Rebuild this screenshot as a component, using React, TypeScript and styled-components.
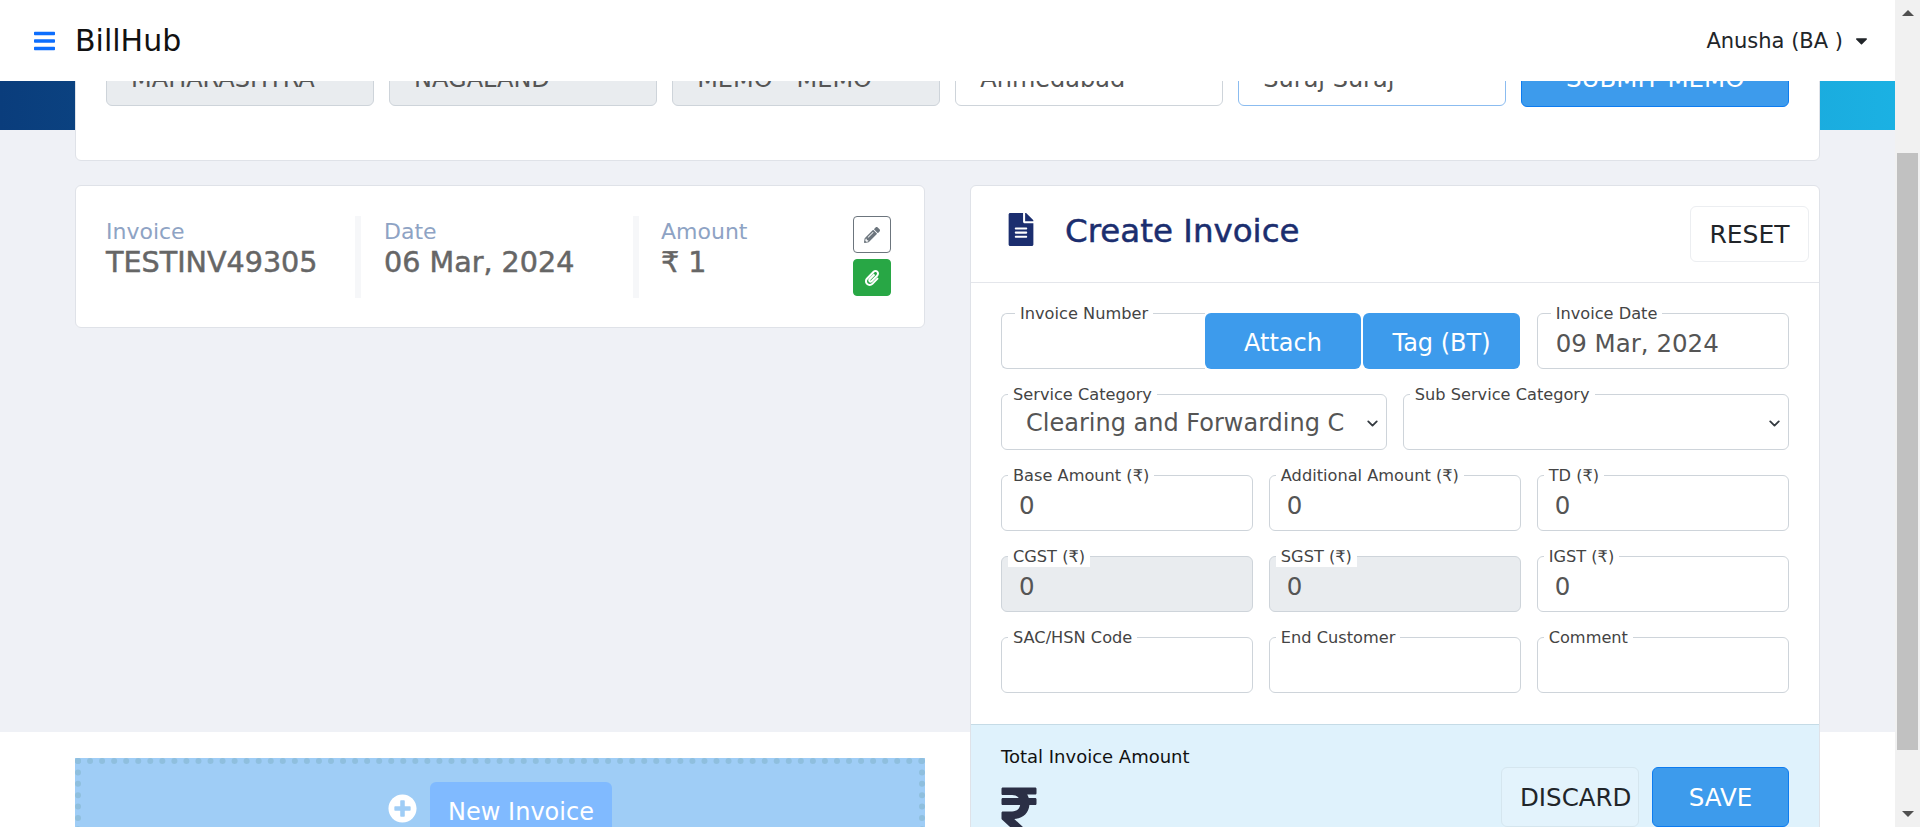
import React from "react";
import styled, { createGlobalStyle } from "styled-components";
import { ChevronDown } from "lucide-react";
import {
  FaBars,
  FaCaretDown,
  FaFileAlt,
  FaPaperclip,
  FaPencilAlt,
  FaPlusCircle,
  FaRupeeSign,
} from "react-icons/fa";

const GlobalStyle = createGlobalStyle`
  html, body {
    margin: 0;
    height: 100%;
    overflow: hidden;
    font-family: "DejaVu Sans", "Noto Sans", sans-serif;
  }
  * { box-sizing: border-box; }
`;

const Shell = styled.div`
  display: flex;
  width: 100%;
  height: 827px;
  overflow: hidden;
`;

const Viewport = styled.div`
  flex: 1;
  min-width: 0;
  display: flex;
  flex-direction: column;
`;

const Navbar = styled.nav`
  position: relative;
  z-index: 2;
  flex: none;
  height: 81px;
  background: #fff;
  display: flex;
  align-items: center;
  padding: 0 24px 0 34px;
`;

const MenuIcon = styled(FaBars)`
  margin-top: 1px;
  width: 21px;
  height: 24px;
  color: #0d6efd;
`;

const Brand = styled.div`
  margin-left: 20px;
  font-size: 30px;
  color: #111;
`;

const UserMenu = styled.div`
  margin-left: auto;
  display: flex;
  align-items: center;
  gap: 9px;
  font-size: 21px;
  color: #212529;
`;

const Main = styled.main`
  flex: 1;
  padding: 0 75px;
  background:
    linear-gradient(90deg, #0a3d7c, #1bb1e3) top / 100% 49px no-repeat,
    linear-gradient(#eff1f6, #eff1f6) top / 100% 651px no-repeat,
    #fff;
`;

const Card = styled.section`
  background: #fff;
  border: 1px solid #dfe2e8;
  border-radius: 6px;
`;

const MemoCard = styled(Card)`
  margin-top: -51px;
  height: 131px;
  padding: 19px 30px 0;
  display: grid;
  grid-template-columns: repeat(6, 1fr);
  column-gap: 15.5px;
  align-items: start;
`;

const Control = styled.div<{ $disabled?: boolean; $focused?: boolean }>`
  height: 56px;
  display: flex;
  align-items: center;
  padding: 4px 18px 0;
  font-size: 24.5px;
  color: #555;
  white-space: nowrap;
  overflow: hidden;
  background: ${(p) => (p.$disabled ? "#e9ecef" : "#fff")};
  border: 1px solid ${(p) => (p.$focused ? "#8bbcf0" : "#ced4da")};
  border-radius: 6px;
`;

const MemoSelect = styled(Control)`
  padding: 2px 18px 0 24px;
  font-size: 24px;
`;

const SubmitButton = styled.button`
  height: 57px;
  border: 1px solid #0d7cf0;
  border-radius: 6px;
  background: #3d9bec;
  color: #fff;
  font: inherit;
  font-size: 24.5px;
`;

const Columns = styled.div`
  margin-top: 24px;
  display: grid;
  grid-template-columns: 850px 850px;
  column-gap: 45px;
  align-items: start;
`;

const LeftColumn = styled.div`
  display: flex;
  flex-direction: column;
`;

const InvoiceCard = styled(Card)`
  height: 143px;
  padding: 30px 33px 29px 30px;
  display: flex;
`;

const Stat = styled.div<{ $width: number; $last?: boolean }>`
  width: ${(p) => p.$width}px;
  flex: ${(p) => (p.$last ? 1 : "none")};
  padding-left: ${(p) => (p.$last ? 22 : 0)}px;
  border-right: ${(p) => (p.$last ? "none" : "6px solid #f6f7f9")};
`;

const DateStat = styled(Stat)`
  padding-left: 23px;
`;

const StatLabel = styled.div`
  padding-top: 1px;
  font-size: 22px;
  line-height: 29px;
  color: #8ea3c4;
`;

const StatValue = styled.div`
  font-size: 28.6px;
  line-height: 33px;
  color: #666;
  -webkit-text-stroke: 0.5px #666;
`;

const ActionStack = styled.div`
  flex: none;
  display: flex;
  flex-direction: column;
  gap: 6px;
`;

const IconButton = styled.button<{ $green?: boolean }>`
  width: 38px;
  height: 37px;
  padding: 0;
  display: flex;
  align-items: center;
  justify-content: center;
  border-radius: 4px;
  border: 1px solid ${(p) => (p.$green ? "#28a745" : "#6c757d")};
  background: ${(p) => (p.$green ? "#28a745" : "#fff")};
  color: ${(p) => (p.$green ? "#fff" : "#6c757d")};
  font-size: 16px;
`;

const AddBox = styled.div`
  margin-top: 430px;
  height: 120px;
  padding-top: 18px;
  display: flex;
  justify-content: center;
  align-items: flex-start;
  gap: 13px;
  background: #9fcdf6;
  border: 6px dotted #8fbfde;
`;

const PlusIcon = styled(FaPlusCircle)`
  margin-top: 12px;
  width: 29px;
  height: 29px;
  color: #fff;
`;

const NewButton = styled.button`
  width: 182px;
  height: 60px;
  border: none;
  border-radius: 6px;
  background: #80baff;
  color: #fff;
  font: inherit;
  font-size: 24px;
`;

const HeaderRow = styled.header`
  height: 97px;
  padding: 20px 10px 0 37px;
  display: flex;
  align-items: flex-start;
  border-bottom: 1px solid #e4e6eb;
`;

const DocIcon = styled(FaFileAlt)`
  margin-top: 7px;
  width: 26px;
  height: 33px;
  color: #1b2e6f;
`;

const Title = styled.h1`
  margin: 0 0 0 31px;
  font-size: 32.5px;
  line-height: 50px;
  font-weight: 400;
  color: #1b2e6f;
  -webkit-text-stroke: 0.5px #1b2e6f;
`;

const ResetButton = styled.button`
  margin-left: auto;
  width: 119px;
  height: 56px;
  background: #fff;
  border: 1px solid #eceef1;
  border-radius: 6px;
  font: inherit;
  font-size: 25px;
  color: #212529;
`;

const FormGrid = styled.div`
  padding: 30px 30px 30px;
  height: 441px;
  display: grid;
  grid-template-columns: repeat(6, 1fr);
  grid-auto-rows: 56px;
  gap: 25px 15.5px;
`;

const Field = styled.div<{ $span: number }>`
  position: relative;
  grid-column: span ${(p) => p.$span};
  min-width: 0;
`;

const FieldLabel = styled.label<{ $inset?: number }>`
  position: absolute;
  z-index: 1;
  top: -9px;
  left: ${(p) => p.$inset ?? 7}px;
  padding: 0 5px;
  background: #fff;
  font-size: 16.2px;
  line-height: 20px;
  color: #444;
  white-space: nowrap;
`;

const AmountControl = styled(Control)`
  padding-left: 17px;
`;

const CategorySelect = styled(Control)`
  padding: 2px 5px 0 24px;
  gap: 10px;
  font-size: 24px;
`;

const SelectText = styled.span`
  flex: 1;
  min-width: 0;
  overflow: hidden;
`;

const Chevron = styled(ChevronDown)`
  flex: none;
  color: #343a40;
`;

const AttachGroup = styled.div`
  display: flex;
`;

const AttachInput = styled(Control)`
  width: 204px;
  flex: none;
  border-right: none;
  border-radius: 6px 0 0 6px;
`;

const BlueButton = styled.button<{ $width: number }>`
  width: ${(p) => p.$width}px;
  flex: none;
  margin-right: 2px;
  padding-top: 4px;
  border: none;
  border-radius: 6px;
  background: #3d9bec;
  color: #fff;
  font: inherit;
  font-size: 24px;
`;

const Footer = styled.footer`
  height: 120px;
  padding: 20px 30px 0;
  display: flex;
  justify-content: space-between;
  background: #dff2fc;
  border-top: 1px solid #c5dbe6;
`;

const TotalLabel = styled.div`
  font-size: 18px;
  line-height: 24px;
  color: #111;
`;

const RupeeIcon = styled(FaRupeeSign)`
  display: block;
  margin-top: 15px;
  width: 36px;
  height: 56px;
  color: #2b2f45;
`;

const FooterActions = styled.div`
  display: flex;
  gap: 13px;
  padding-top: 22px;
`;

const DiscardButton = styled.button`
  width: 138px;
  height: 60px;
  padding: 0 0 0 18px;
  text-align: left;
  white-space: nowrap;
  background: #e3f3fc;
  border: 1px solid #d5e6ef;
  border-radius: 6px;
  font: inherit;
  font-size: 24.5px;
  color: #212529;
`;

const SaveButton = styled.button`
  width: 137px;
  height: 60px;
  background: #3d9bec;
  border: 1px solid #0d7cf0;
  border-radius: 6px;
  color: #fff;
  font: inherit;
  font-size: 24.5px;
`;

const ScrollTrack = styled.div`
  flex: none;
  width: 25px;
  height: 100%;
  padding: 0 2px;
  background: #f1f1f1;
  display: flex;
  flex-direction: column;
  align-items: center;
`;

const ArrowUp = styled.div`
  margin-top: 10px;
  border: 6px solid transparent;
  border-top: none;
  border-bottom-color: #505050;
`;

const ScrollThumb = styled.div`
  margin-top: 137px;
  width: 21px;
  height: 597px;
  background: #c1c1c1;
`;

const ArrowDown = styled.div`
  margin-top: 61px;
  border: 6px solid transparent;
  border-bottom: none;
  border-top-color: #505050;
`;

const memoFields = ["MAHARASHTRA", "NAGALAND", "MEMO - MEMO"];

const amountRows = [
  { label: "Base Amount (₹)", disabled: false },
  { label: "Additional Amount (₹)", disabled: false },
  { label: "TD (₹)", disabled: false },
  { label: "CGST (₹)", disabled: true },
  { label: "SGST (₹)", disabled: true },
  { label: "IGST (₹)", disabled: false },
];

const App = () => {
  return (
    <>
      <GlobalStyle />
      <Shell>
        <Viewport>
          <Navbar>
            <MenuIcon />
            <Brand>BillHub</Brand>
            <UserMenu>
              Anusha (BA )
              <FaCaretDown size={19} />
            </UserMenu>
          </Navbar>
          <Main>
            <MemoCard>
              {memoFields.map((name) => (
                <MemoSelect key={name} $disabled>
                  {name}
                </MemoSelect>
              ))}
              <MemoSelect>Ahmedabad</MemoSelect>
              <MemoSelect $focused>Suraj Suraj</MemoSelect>
              <SubmitButton>SUBMIT MEMO</SubmitButton>
            </MemoCard>
            <Columns>
              <LeftColumn>
                <InvoiceCard>
                  <Stat $width={255}>
                    <StatLabel>Invoice</StatLabel>
                    <StatValue>TESTINV49305</StatValue>
                  </Stat>
                  <DateStat $width={278}>
                    <StatLabel>Date</StatLabel>
                    <StatValue>06 Mar, 2024</StatValue>
                  </DateStat>
                  <Stat $width={0} $last>
                    <StatLabel>Amount</StatLabel>
                    <StatValue>₹ 1</StatValue>
                  </Stat>
                  <ActionStack>
                    <IconButton>
                      <FaPencilAlt />
                    </IconButton>
                    <IconButton $green>
                      <FaPaperclip />
                    </IconButton>
                  </ActionStack>
                </InvoiceCard>
                <AddBox>
                  <PlusIcon />
                  <NewButton>New Invoice</NewButton>
                </AddBox>
              </LeftColumn>
              <Card>
                <HeaderRow>
                  <DocIcon />
                  <Title>Create Invoice</Title>
                  <ResetButton>RESET</ResetButton>
                </HeaderRow>
                <FormGrid>
                  <Field $span={4}>
                    <FieldLabel $inset={14}>Invoice Number</FieldLabel>
                    <AttachGroup>
                      <AttachInput />
                      <BlueButton $width={156}>Attach</BlueButton>
                      <BlueButton $width={157}>Tag (BT)</BlueButton>
                    </AttachGroup>
                  </Field>
                  <Field $span={2}>
                    <FieldLabel $inset={14}>Invoice Date</FieldLabel>
                    <Control>09 Mar, 2024</Control>
                  </Field>
                  <Field $span={3}>
                    <FieldLabel>Service Category</FieldLabel>
                    <CategorySelect>
                      <SelectText>Clearing and Forwarding C</SelectText>
                      <Chevron size={17} strokeWidth={2.6} />
                    </CategorySelect>
                  </Field>
                  <Field $span={3}>
                    <FieldLabel>Sub Service Category</FieldLabel>
                    <CategorySelect>
                      <SelectText />
                      <Chevron size={17} strokeWidth={2.6} />
                    </CategorySelect>
                  </Field>
                  {amountRows.map((row) => (
                    <Field key={row.label} $span={2}>
                      <FieldLabel>{row.label}</FieldLabel>
                      <AmountControl $disabled={row.disabled}>0</AmountControl>
                    </Field>
                  ))}
                  {["SAC/HSN Code", "End Customer", "Comment"].map((label) => (
                    <Field key={label} $span={2}>
                      <FieldLabel>{label}</FieldLabel>
                      <Control />
                    </Field>
                  ))}
                </FormGrid>
                <Footer>
                  <div>
                    <TotalLabel>Total Invoice Amount</TotalLabel>
                    <RupeeIcon />
                  </div>
                  <FooterActions>
                    <DiscardButton>DISCARD</DiscardButton>
                    <SaveButton>SAVE</SaveButton>
                  </FooterActions>
                </Footer>
              </Card>
            </Columns>
          </Main>
        </Viewport>
        <ScrollTrack>
          <ArrowUp />
          <ScrollThumb />
          <ArrowDown />
        </ScrollTrack>
      </Shell>
    </>
  );
};

export default App;
